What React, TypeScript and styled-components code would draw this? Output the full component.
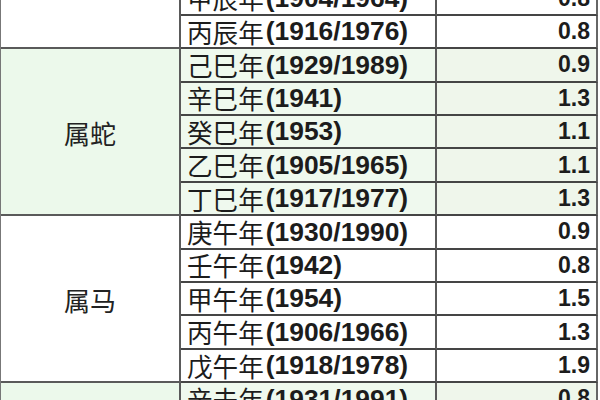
import styled, { createGlobalStyle } from 'styled-components';

const GlobalStyle = createGlobalStyle`
  html, body {
    margin: 0;
    padding: 0;
    background: #ffffff;
    overflow: hidden;
  }
`;

const LINE = '#454545';

const Sheet = styled.div`
  display: grid;
  grid-template-columns: 180px 256px 161px;
  grid-auto-rows: 33.4px;
  width: 598px;
  margin-top: -17.6px;
  border-left: 1px solid #777;
  box-sizing: border-box;
`;

const GroupCell = styled.div<{ $tint: boolean; $span: number }>`
  grid-column: 1;
  grid-row: span ${(p) => p.$span};
  display: flex;
  align-items: center;
  justify-content: center;
  background: ${(p) => (p.$tint ? '#ecf9eb' : '#ffffff')};
  border-right: 2px solid #5a5a5a;
  border-bottom: 2px solid #5a5a5a;
  box-sizing: border-box;
  font-family: 'Noto Sans CJK SC', 'Noto Sans', sans-serif;
  font-size: 26px;
  color: #222;
  padding-top: 2px;
`;

const YearCell = styled.div<{ $tint: boolean }>`
  grid-column: 2;
  display: flex;
  align-items: center;
  padding-left: 6px;
  background: ${(p) => (p.$tint ? '#eff9ee' : '#ffffff')};
  border-right: 2px solid #5a5a5a;
  border-bottom: 2px solid ${LINE};
  box-sizing: border-box;
  color: #1c1c1c;
  white-space: nowrap;
`;

const Stem = styled.span`
  font-family: 'Noto Sans CJK SC', 'Noto Sans', sans-serif;
  font-size: 25.6px;
  line-height: 1;
`;

const Years = styled.span`
  font-family: 'Liberation Sans', Arial, sans-serif;
  font-weight: bold;
  font-size: 26.4px;
  line-height: 1;
  margin-left: 2px;
`;

const ValueCell = styled.div<{ $tint: boolean }>`
  grid-column: 3;
  display: flex;
  align-items: center;
  justify-content: flex-end;
  padding-right: 6px;
  background: ${(p) => (p.$tint ? '#eff6eb' : '#ffffff')};
  border-right: 2px solid #666;
  border-bottom: 2px solid ${LINE};
  box-sizing: border-box;
  font-family: 'Liberation Sans', Arial, sans-serif;
  font-weight: bold;
  font-size: 23px;
  color: #1c1c1c;
`;

type Row = [string, string, string];
type Group = { label: string; tint: boolean; rows: Row[] };

const groups: Group[] = [
  {
    label: '',
    tint: false,
    rows: [
      ['甲辰年', '(1904/1964)', '0.8'],
      ['丙辰年', '(1916/1976)', '0.8'],
    ],
  },
  {
    label: '属蛇',
    tint: true,
    rows: [
      ['己巳年', '(1929/1989)', '0.9'],
      ['辛巳年', '(1941)', '1.3'],
      ['癸巳年', '(1953)', '1.1'],
      ['乙巳年', '(1905/1965)', '1.1'],
      ['丁巳年', '(1917/1977)', '1.3'],
    ],
  },
  {
    label: '属马',
    tint: false,
    rows: [
      ['庚午年', '(1930/1990)', '0.9'],
      ['壬午年', '(1942)', '0.8'],
      ['甲午年', '(1954)', '1.5'],
      ['丙午年', '(1906/1966)', '1.3'],
      ['戊午年', '(1918/1978)', '1.9'],
    ],
  },
  {
    label: '',
    tint: true,
    rows: [['辛未年', '(1931/1991)', '0.8']],
  },
];

export default function App() {
  return (
    <>
      <GlobalStyle />
      <Sheet>
        {groups.map((g, gi) => [
          <GroupCell key={`g${gi}`} $tint={g.tint} $span={g.rows.length}>
            {g.label}
          </GroupCell>,
          ...g.rows.flatMap(([stem, years, value], ri) => [
            <YearCell key={`y${gi}-${ri}`} $tint={g.tint}>
              <Stem>{stem}</Stem>
              <Years>{years}</Years>
            </YearCell>,
            <ValueCell key={`v${gi}-${ri}`} $tint={g.tint}>
              {value}
            </ValueCell>,
          ]),
        ])}
      </Sheet>
    </>
  );
}
